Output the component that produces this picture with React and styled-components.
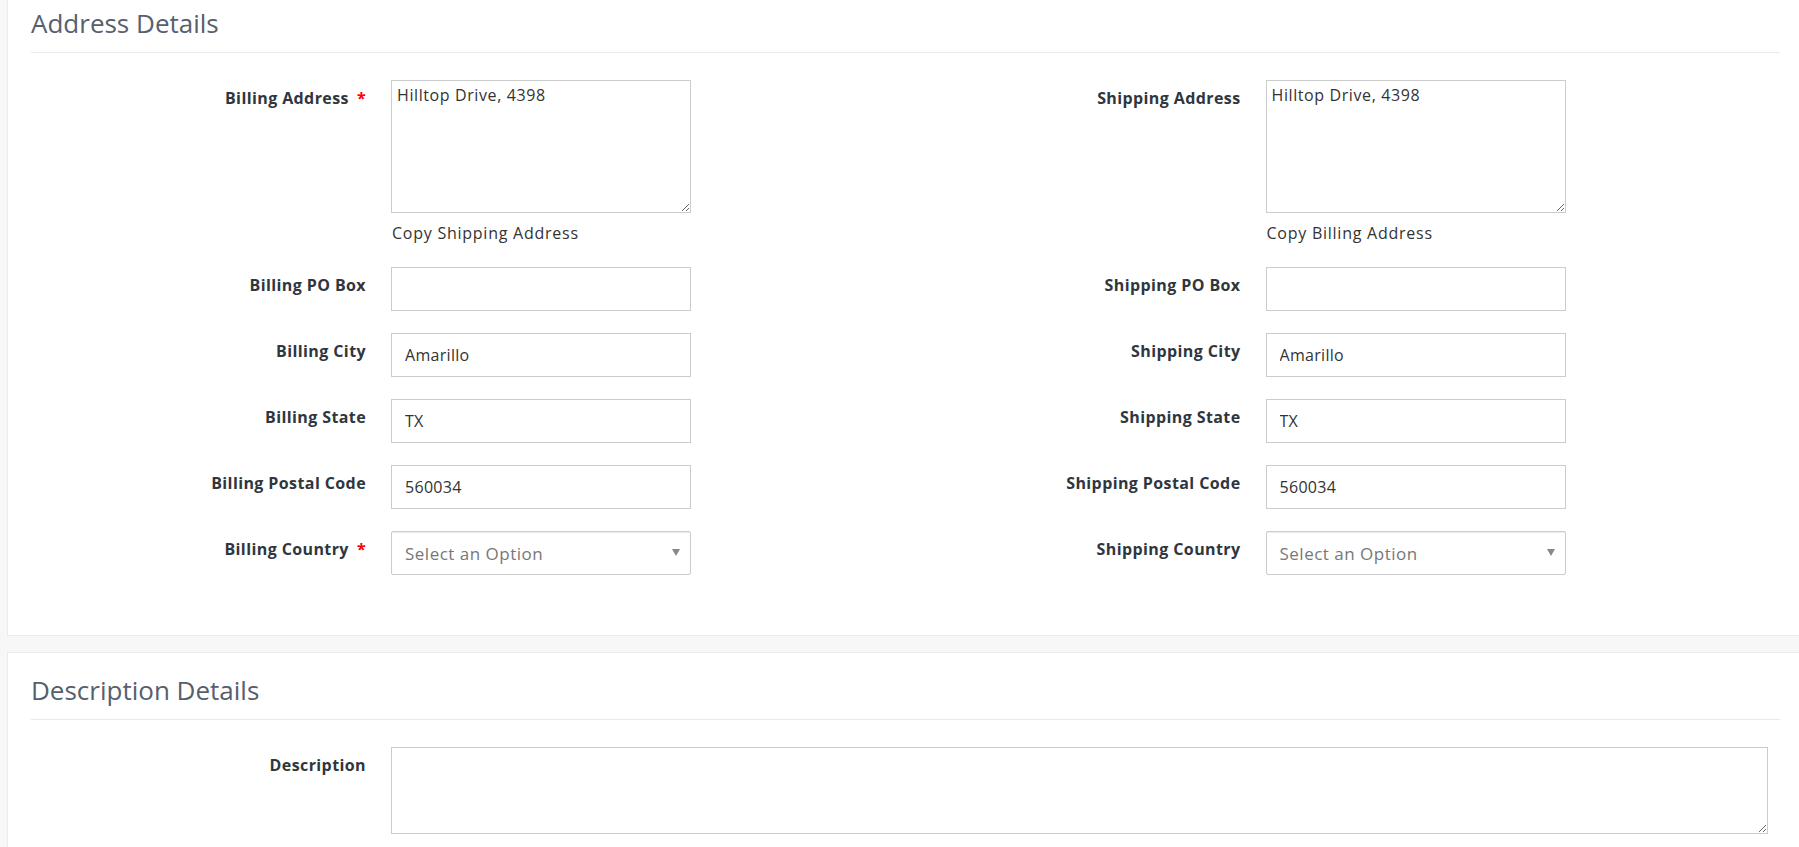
import React from 'react';
import styled, { createGlobalStyle } from 'styled-components';

const GlobalStyle = createGlobalStyle`
  html, body {
    margin: 0;
    padding: 0;
    background: #f7f7f7;
    font-family: "Open Sans", "Liberation Sans", sans-serif;
    color: #333;
    overflow: hidden;
  }
`;

const Page = styled.div`
  display: flex;
  flex-direction: column;
  gap: 16px;
  margin-top: -15px;
  padding-left: 7px;
`;

const Card = styled.section`
  background: #fff;
  border: 1px solid #ebebeb;
  border-right: none;
  padding: 0 19px ${(p) => p.$bottom}px 23px;
`;

const Heading = styled.h3`
  margin: 0;
  padding: 23px 0 14px;
  font-size: 26px;
  line-height: 29px;
  font-weight: 400;
  color: #56606d;
  border-bottom: 1px solid #e9e9e9;
`;

const FormGrid = styled.div`
  display: grid;
  grid-template-columns: ${(p) => (p.$single ? '1fr' : '1fr 1fr')};
  row-gap: 22px;
  padding-top: 27px;
`;

const Field = styled.div`
  display: grid;
  grid-template-columns: 360px 1fr;
  align-items: start;
`;

const Label = styled.label`
  padding: 8px 25px 0 0;
  text-align: right;
  font-size: 16px;
  line-height: 20px;
  font-weight: 700;
  letter-spacing: 0.4px;
  color: #2f363e;
`;

const Required = styled.span`
  color: #ff0000;
  margin-left: 8px;
  font-weight: 700;
`;

const Control = styled.div`
  display: flex;
  flex-direction: column;
  width: ${(p) => (p.$wide ? 'auto' : '300px')};
  margin-right: ${(p) => (p.$wide ? '12px' : '0')};
`;

const TextArea = styled.textarea`
  box-sizing: border-box;
  width: 100%;
  height: ${(p) => p.$height}px;
  margin: 0;
  padding: 4px 5px;
  border: 1px solid #cccccc;
  border-radius: 0;
  font-family: inherit;
  font-size: 16px;
  letter-spacing: 0.6px;
  line-height: 20px;
  color: #333;
  background: #fff;
  outline: none;
`;

const Input = styled.input`
  box-sizing: border-box;
  width: 100%;
  height: 44px;
  margin: 0;
  padding: 0 13px;
  border: 1px solid #cccccc;
  border-radius: 0;
  font-family: inherit;
  font-size: 16px;
  letter-spacing: 0.3px;
  color: #333;
  background: #fff;
  outline: none;
`;

const CopyLink = styled.div`
  margin: 10px 0 2px 1px;
  font-size: 16px;
  letter-spacing: 0.75px;
  line-height: 20px;
  color: #333;
`;

const Select = styled.div`
  box-sizing: border-box;
  height: 44px;
  display: flex;
  align-items: center;
  justify-content: space-between;
  padding: 0 10px 0 13px;
  border: 1px solid #cccccc;
  border-radius: 2px;
  box-shadow: inset 0 1px 1px rgba(0, 0, 0, 0.08);
  font-size: 17px;
  letter-spacing: 0.5px;
  color: #777;
  background: #fff;
`;

const Caret = styled.span`
  width: 0;
  height: 0;
  margin-top: -2px;
  border-left: 4px solid transparent;
  border-right: 4px solid transparent;
  border-top: 7px solid #888;
`;

const billing = [
  ['Billing PO Box', ''],
  ['Billing City', 'Amarillo'],
  ['Billing State', 'TX'],
  ['Billing Postal Code', '560034'],
];

const shipping = [
  ['Shipping PO Box', ''],
  ['Shipping City', 'Amarillo'],
  ['Shipping State', 'TX'],
  ['Shipping Postal Code', '560034'],
];

const TextField = ({ label, value, required }) => (
  <Field>
    <Label>
      {label}
      {required && <Required>*</Required>}
    </Label>
    <Control>
      <Input defaultValue={value} />
    </Control>
  </Field>
);

const AddressField = ({ label, value, copy, required }) => (
  <Field>
    <Label>
      {label}
      {required && <Required>*</Required>}
    </Label>
    <Control>
      <TextArea $height={133} defaultValue={value} />
      <CopyLink>{copy}</CopyLink>
    </Control>
  </Field>
);

const SelectField = ({ label, required }) => (
  <Field>
    <Label>
      {label}
      {required && <Required>*</Required>}
    </Label>
    <Control>
      <Select>
        <span>Select an Option</span>
        <Caret />
      </Select>
    </Control>
  </Field>
);

const App = () => (
  <>
    <GlobalStyle />
    <Page>
      <Card $bottom={60}>
        <Heading>Address Details</Heading>
        <FormGrid>
          <AddressField label="Billing Address" value="Hilltop Drive, 4398" copy="Copy Shipping Address" required />
          <AddressField label="Shipping Address" value="Hilltop Drive, 4398" copy="Copy Billing Address" />
          {billing.map(([label, value], i) => (
            <React.Fragment key={label}>
              <TextField label={label} value={value} />
              <TextField label={shipping[i][0]} value={shipping[i][1]} />
            </React.Fragment>
          ))}
          <SelectField label="Billing Country" required />
          <SelectField label="Shipping Country" />
        </FormGrid>
      </Card>
      <Card $bottom={40}>
        <Heading>Description Details</Heading>
        <FormGrid $single>
          <Field>
            <Label>Description</Label>
            <Control $wide>
              <TextArea $height={87} />
            </Control>
          </Field>
        </FormGrid>
      </Card>
    </Page>
  </>
);

export default App;
